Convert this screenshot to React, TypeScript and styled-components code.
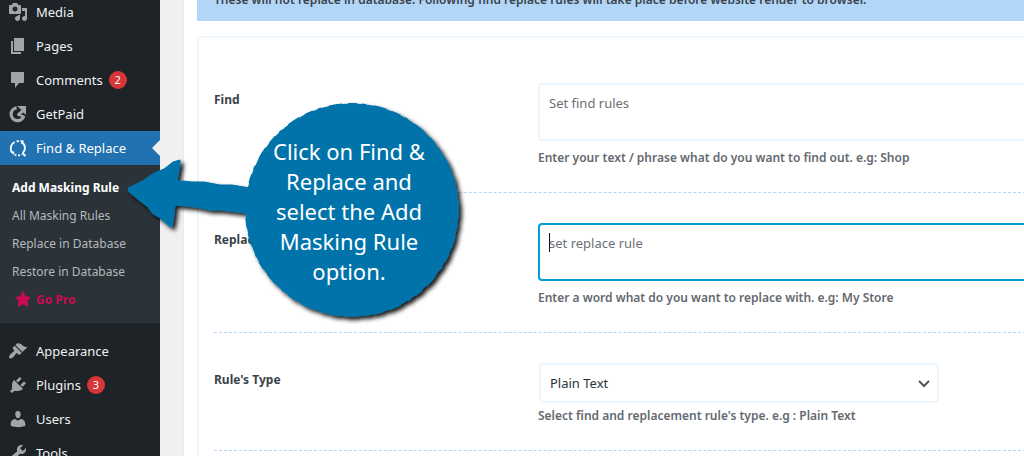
import React from "react";
import styled, { createGlobalStyle, css } from "styled-components";

const Global = createGlobalStyle`
  *, *::before, *::after { box-sizing: border-box; }
  body {
    margin: 0;
    background: #f0f0f1;
    color: #3c434a;
    font-family: "Noto Sans", "Open Sans", sans-serif;
    font-size: 13px;
    overflow: hidden;
  }
`;

const Shell = styled.div`
  position: relative;
  display: flex;
  height: 100vh;
  overflow: hidden;
`;

const Sidebar = styled.nav`
  flex: 0 0 160px;
  align-self: flex-start;
  margin-top: -5px;
  min-height: calc(100vh + 5px);
  background: #1d2327;
`;

const MenuLink = styled.a<{ $active?: boolean }>`
  position: relative;
  display: flex;
  align-items: center;
  height: 34px;
  padding-left: 8px;
  color: #f0f0f1;
  font-size: 13px;
  text-decoration: none;
  white-space: nowrap;
  svg {
    flex: none;
    margin-right: 8px;
    color: #a0a5aa;
  }
  ${(p) =>
    p.$active &&
    css`
      background: #2271b1;
      color: #fff;
      svg { color: #fff; }
      &::after {
        content: "";
        position: absolute;
        right: 0;
        top: 9px;
        border: 8px solid transparent;
        border-right-color: #f0f0f1;
        border-left: 0;
      }
    `}
`;

const Badge = styled.span`
  display: grid;
  place-items: center;
  width: 18px;
  height: 18px;
  margin-left: 6px;
  border-radius: 9px;
  background: #d63638;
  color: #fff;
  font-size: 11px;
  line-height: 18px;
`;

const Submenu = styled.div`
  display: flex;
  flex-direction: column;
  padding: 8px 0 10px;
  margin-bottom: 11px;
  background: #2c3338;
`;

const SubLink = styled.a<{ $tone?: "current" | "pro" }>`
  display: flex;
  align-items: center;
  gap: 5px;
  height: 28px;
  padding-left: ${(p) => (p.$tone === "pro" ? 15 : 12)}px;
  color: ${(p) => (p.$tone === "current" ? "#fff" : p.$tone === "pro" ? "#ca0a53" : "#b4b9be")};
  font-size: 12px;
  font-weight: ${(p) => (p.$tone ? 700 : 400)};
  text-decoration: none;
  white-space: nowrap;
`;

const Main = styled.main`
  flex: 1;
  min-width: 0;
  margin: 0 -24px 0 22px;
  padding-left: 13px;
  border-left: 2px solid #f0ebee;
  background: #fff;
`;

const Notice = styled.p`
  display: flex;
  align-items: flex-end;
  height: 21px;
  margin: 0 0 15px;
  padding: 0 17px 12px;
  background: #b2d6f8;
  font-size: 12px;
  font-weight: 600;
  line-height: 18px;
  white-space: nowrap;
`;

const Card = styled.form`
  padding: 15px;
  border: 2px solid #eff7ff;
  border-bottom: 0;
`;

const Row = styled.div`
  display: grid;
  grid-template-columns: 324px minmax(0, 1fr);
  padding: 30px 0 24px;
  border-bottom: 1px dashed #b2d6f8;
`;

const RowLabel = styled.label`
  padding-top: 7px;
  font-size: 12px;
  font-weight: 700;
  line-height: 20px;
`;

const Field = styled.div`
  position: relative;
  display: flex;
  flex-direction: column;
`;

const TextArea = styled.textarea<{ $focused?: boolean }>`
  display: block;
  width: 100%;
  height: 58px;
  padding: 8px 9px;
  border: 2px solid ${(p) => (p.$focused ? "#00a0d2" : "#ebf5fe")};
  border-radius: 4px;
  outline: 0;
  resize: none;
  background: #fff;
  color: #3c434a;
  font: 13px/20px "Noto Sans", "Open Sans", sans-serif;
  &::placeholder { color: #6b7078; opacity: 1; }
`;

const Caret = styled.span`
  position: absolute;
  left: 11px;
  top: 10px;
  width: 1px;
  height: 19px;
  background: #111;
`;

const SelectBox = styled.div`
  position: relative;
  width: 400px;
  max-width: 100%;
  margin-left: 1px;
  svg {
    position: absolute;
    right: 8px;
    top: 13px;
    pointer-events: none;
  }
`;

const Select = styled.select`
  display: block;
  width: 100%;
  height: 40px;
  padding: 0 24px 0 9px;
  appearance: none;
  border: 2px solid #ebf5fe;
  border-radius: 4px;
  background: #fff;
  color: #2c3338;
  font: 13px/20px "Noto Sans", "Open Sans", sans-serif;
`;

const Help = styled.p<{ $tight?: boolean }>`
  margin: ${(p) => (p.$tight ? 3 : 7)}px 0 0;
  color: #646970;
  font-size: 12px;
  font-weight: 600;
  line-height: 20px;
  white-space: nowrap;
`;

const Callout = styled.aside`
  position: absolute;
  left: 120px;
  top: 95px;
  width: 350px;
  height: 235px;
  pointer-events: none;
  > svg { display: block; }
`;

const CalloutText = styled.p`
  position: absolute;
  left: 139px;
  top: 41px;
  width: 180px;
  margin: 0;
  color: #fff;
  font-size: 22px;
  line-height: 30px;
  text-align: center;
  white-space: nowrap;
`;

const icons = {
  media:
    "M13 11V4c0-.55-.45-1-1-1h-1.67L9 1H5L3.67 3H2c-.55 0-1 .45-1 1v7c0 .55.45 1 1 1h10c.55 0 1-.45 1-1zM7 4.5c1.38 0 2.5 1.12 2.5 2.5S8.38 9.5 7 9.5 4.5 8.38 4.5 7 5.62 4.5 7 4.5zM14 6h5v10.5c0 1.38-1.12 2.5-2.5 2.5S14 17.88 14 16.5s1.12-2.5 2.5-2.5c.17 0 .34.02.5.05V9h-3V6zm-4 8.05V13h2v3.5c0 1.38-1.12 2.5-2.5 2.5S7 17.88 7 16.5 8.12 14 9.5 14c.17 0 .34.02.5.05z",
  pages: "M6 15V2h10v13H6zm-1 1h8v2H3V5h2v11z",
  comments: "M4 2h11c.6 0 1 .4 1 1v9c0 .6-.4 1-1 1h-4l-4 5v-5H4c-.6 0-1-.4-1-1V3c0-.6.4-1 1-1z",
  appearance:
    "M14.48 11.06L7.41 3.99l1.5-1.5c.5-.56 2.3-.47 3.51.32 1.21.8 1.43 1.28 2.91 2.1 1.18.64 2.45 1.26 4.45.85zm-.71.71L6.7 4.7 4.93 6.47c-.39.39-.39 1.02 0 1.41l1.06 1.06c.39.39.39 1.03 0 1.42-.6.6-1.43 1.11-2.21 1.69-.35.26-.7.53-1.01.84C1.43 14.23.4 16.08 1.4 17.07c.99 1 2.84-.03 4.18-1.36.31-.31.58-.66.85-1.02.57-.78 1.08-1.61 1.69-2.21.39-.39 1.02-.39 1.41 0l1.06 1.06c.39.39 1.02.39 1.41 0z",
  plugins:
    "M13.11 4.36L9.87 7.6 8 5.73l3.24-3.24c.35-.34 1.05-.2 1.56.32.52.51.66 1.21.31 1.55zm-8 1.77l.91-1.12 9.01 9.01-1.19.84c-.71.71-2.63 1.16-3.82 1.16H6.14L4.9 17.26c-.59.59-1.54.59-2.12 0-.59-.58-.59-1.53 0-2.12l1.24-1.24v-3.88c0-1.13.4-3.19 1.09-3.89zm7.26 3.97l3.24-3.24c.34-.35 1.04-.21 1.55.31.52.51.66 1.21.31 1.55l-3.24 3.25z",
  users:
    "M10 9.25c-2.27 0-2.73-3.44-2.73-3.44C7 4.02 7.82 2 9.97 2c2.16 0 2.98 2.02 2.71 3.81 0 0-.41 3.44-2.68 3.44zm0 2.57L12.72 10c2.39 0 4.52 2.33 4.52 4.53v2.49s-3.65 1.13-7.24 1.13c-3.65 0-7.24-1.13-7.24-1.13v-2.49c0-2.25 1.94-4.48 4.47-4.48z",
  tools:
    "M16.68 9.77c-1.34 1.34-3.3 1.67-4.95.99l-5.41 6.52c-.99.99-2.59.99-3.58 0s-.99-2.59 0-3.57l6.52-5.42c-.68-1.65-.35-3.61.99-4.95 1.28-1.28 3.12-1.62 4.72-1.06l-2.89 2.89 2.82 2.82 2.86-2.87c.53 1.58.18 3.39-1.08 4.65zM3.81 16.21c.4.39 1.04.39 1.43 0 .4-.4.4-1.04 0-1.43-.39-.4-1.03-.4-1.43 0-.39.39-.39 1.03 0 1.43z",
};

const Icon = ({ name }: { name: keyof typeof icons }) => (
  <svg width="20" height="20" viewBox="0 0 20 20" fill="currentColor" aria-hidden="true">
    <path d={icons[name]} />
  </svg>
);

const GetPaidIcon = () => (
  <svg width="20" height="20" viewBox="0 0 20 20" fill="none" stroke="currentColor" aria-hidden="true">
    <path d="M8.6 3.9A6.4 6.4 0 1 0 15.8 11.6" strokeWidth="3.2" />
    <path d="M9 2h9v9l-2.6-2.6-2.6 2.2 3 .6-.6 2.2-6.2-2 .4-2 4-3.4z" fill="currentColor" stroke="none" />
  </svg>
);

const FindReplaceIcon = () => (
  <svg width="20" height="20" viewBox="0 0 20 20" fill="none" stroke="currentColor" strokeWidth="1.8" aria-hidden="true">
    <path d="M6.6 4A7 7 0 0 0 4.2 14.6" />
    <path d="M13.6 4a7 7 0 0 1 1.2 11" />
    <path d="M6.6 16.4a7 7 0 0 0 7.4 0" strokeDasharray="2 1.6" />
    <path d="M8.6 3.2h2.4" />
    <path d="M1.8 13.4h4.4v3.6z M12.2 2l4 .8-2.6 3.4z" fill="currentColor" stroke="none" />
    <path d="M14.4 14.8l3 3.4" strokeWidth="2" />
  </svg>
);

export default function App() {
  return (
    <>
      <Global />
      <Shell>
        <Sidebar aria-label="Admin menu">
          <MenuLink href="#media"><Icon name="media" />Media</MenuLink>
          <MenuLink href="#pages"><Icon name="pages" />Pages</MenuLink>
          <MenuLink href="#comments"><Icon name="comments" />Comments<Badge>2</Badge></MenuLink>
          <MenuLink href="#getpaid"><GetPaidIcon />GetPaid</MenuLink>
          <MenuLink href="#find-replace" $active><FindReplaceIcon />Find &amp; Replace</MenuLink>
          <Submenu>
            <SubLink href="#add-rule" $tone="current">Add Masking Rule</SubLink>
            <SubLink href="#all-rules">All Masking Rules</SubLink>
            <SubLink href="#replace-db">Replace in Database</SubLink>
            <SubLink href="#restore-db">Restore in Database</SubLink>
            <SubLink href="#pro" $tone="pro">
              <svg width="16" height="16" viewBox="1 1 18 18" fill="currentColor" aria-hidden="true">
                <path d="M10 1l3 6 6 .75-4.12 4.62L16 19l-6-3-6 3 1.13-6.63L1 7.75 7 7z" />
              </svg>
              Go Pro
            </SubLink>
          </Submenu>
          <MenuLink href="#appearance"><Icon name="appearance" />Appearance</MenuLink>
          <MenuLink href="#plugins"><Icon name="plugins" />Plugins<Badge>3</Badge></MenuLink>
          <MenuLink href="#users"><Icon name="users" />Users</MenuLink>
          <MenuLink href="#tools"><Icon name="tools" />Tools</MenuLink>
        </Sidebar>

        <Main>
          <Notice>
            These will not replace in database. Following find replace rules will take place before website render to browser.
          </Notice>
          <Card>
            <Row>
              <RowLabel htmlFor="find">Find</RowLabel>
              <Field>
                <TextArea id="find" placeholder="Set find rules" />
                <Help>Enter your text / phrase what do you want to find out. e.g: Shop</Help>
              </Field>
            </Row>
            <Row>
              <RowLabel htmlFor="replace">Replace</RowLabel>
              <Field>
                <TextArea id="replace" placeholder="set replace rule" $focused />
                <Caret />
                <Help>Enter a word what do you want to replace with. e.g: My Store</Help>
              </Field>
            </Row>
            <Row>
              <RowLabel htmlFor="type">Rule's Type</RowLabel>
              <Field>
                <SelectBox>
                  <Select id="type" defaultValue="plain">
                    <option value="plain">Plain Text</option>
                  </Select>
                  <svg width="14" height="14" viewBox="0 0 14 14" fill="none" stroke="#50575e" strokeWidth="2" aria-hidden="true">
                    <path d="M2 5l5 5 5-5" />
                  </svg>
                </SelectBox>
                <Help $tight>Select find and replacement rule's type. e.g : Plain Text</Help>
              </Field>
            </Row>
          </Card>
        </Main>

        <Callout>
          <svg width="350" height="235" viewBox="0 0 350 235" aria-hidden="true">
            <defs>
              <filter id="shade" x="-5%" y="-5%" width="115%" height="115%">
                <feDropShadow dx="3" dy="3" stdDeviation="2" floodColor="#000" floodOpacity="0.9" />
              </filter>
            </defs>
            <g fill="#0073aa" stroke="#0073aa" strokeLinejoin="round" filter="url(#shade)">
              <path d="M8 93L24 85 34 78 44 74 53 67 60 65 60 70 57 86 63 86 72 87 84 87 100 90 112 90 130 93 140 120 118 117 100 115 90 115 76 112 55 110 54 120 52 132 48 130 40 123 32 118 28 112 20 106 9 97z" />
              <circle cx="232" cy="115" r="106" />
              <circle cx="232" cy="115" r="106" fill="none" strokeWidth="2" strokeDasharray="9 5 4 8 13 6" />
            </g>
          </svg>
          <CalloutText>
            Click on Find &amp;<br />Replace and<br />select the Add<br />Masking Rule<br />option.
          </CalloutText>
        </Callout>
      </Shell>
    </>
  );
}
